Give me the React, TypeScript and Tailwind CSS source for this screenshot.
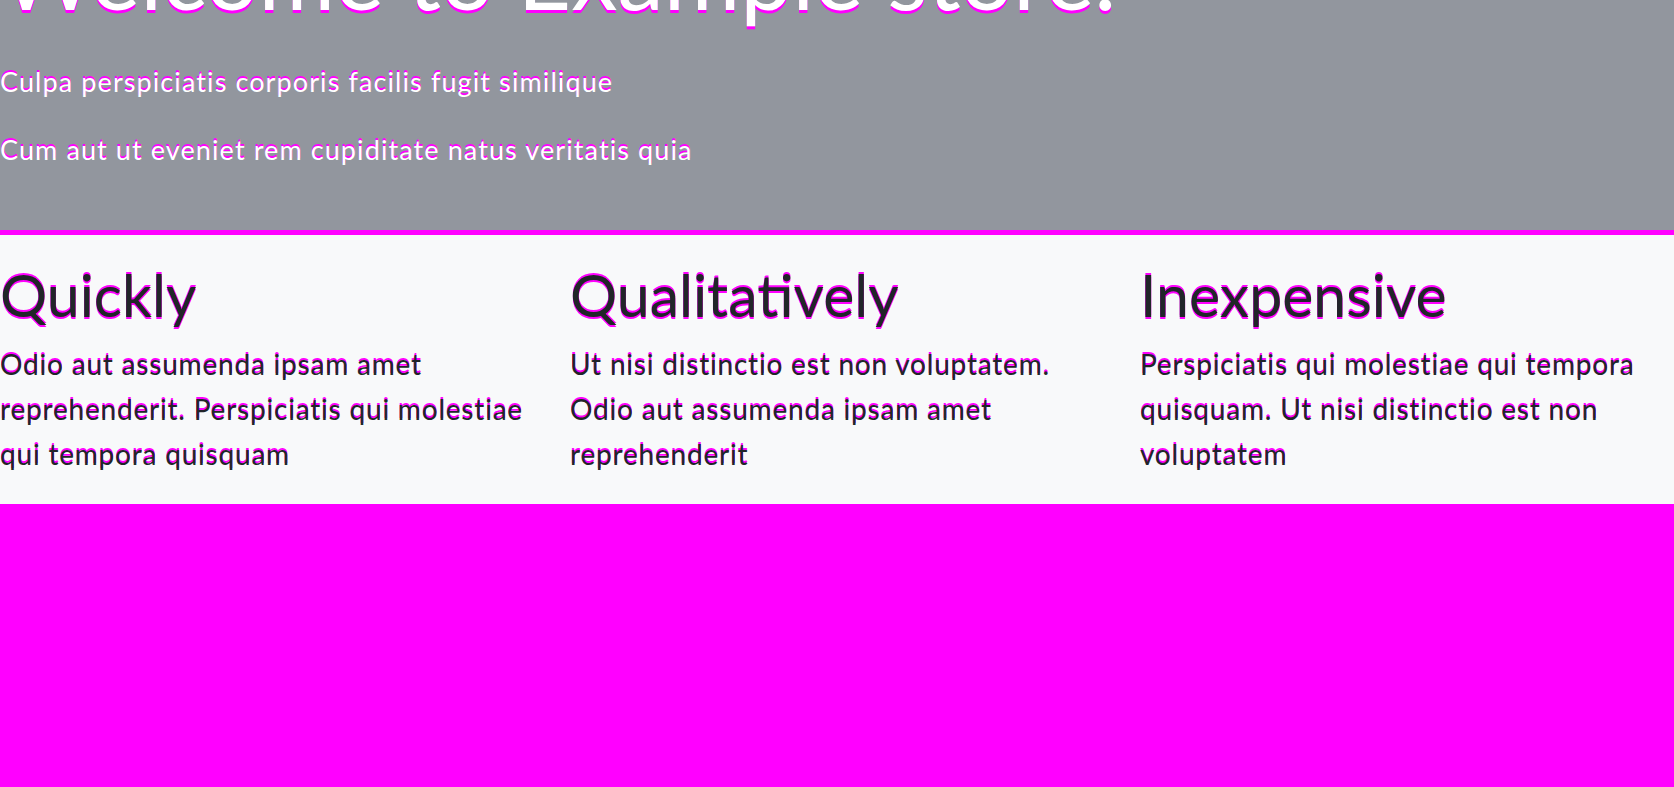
const features = [
  {
    title: "Quickly",
    text: "Odio aut assumenda ipsam amet reprehenderit. Perspiciatis qui molestiae qui tempora quisquam",
  },
  {
    title: "Qualitatively",
    text: "Ut nisi distinctio est non voluptatem. Odio aut assumenda ipsam amet reprehenderit",
  },
  {
    title: "Inexpensive",
    text: "Perspiciatis qui molestiae qui tempora quisquam. Ut nisi distinctio est non voluptatem",
  },
];

const App = () => {
  return (
    <div className="min-h-screen bg-[#ff00ff] font-['Lato',sans-serif]">
      <section className="overflow-hidden border-b-[5px] border-[#ff00ff] bg-[#92969e] pb-[60px] text-white">
        <h1 className="-mt-[81px] text-[93px] leading-[1.2] [text-shadow:0_3px_0_#ff00ff]">
          Welcome to Example store.
        </h1>
        <p className="mt-[31px] text-[27px] leading-[40px] tracking-[1.1px] [text-shadow:0_-2px_0_#ff00ff]">
          Culpa perspiciatis corporis facilis fugit similique
        </p>
        <p className="mt-[28px] text-[27px] leading-[40px] tracking-[1.1px] [text-shadow:0_-2px_0_#ff00ff]">
          Cum aut ut eveniet rem cupiditate natus veritatis quia
        </p>
      </section>

      <section className="bg-[#f8f9fa] pt-[24px] pb-[27px] text-[#212529]">
        <div className="grid grid-cols-[repeat(3,534px)] gap-x-[36px]">
          {features.map(({ title, text }) => (
            <div key={title}>
              <h2 className="text-[59px] leading-[72px] [text-shadow:0_-2px_0_#ff00ff,0_2px_0_#ff00ff]">
                {title}
              </h2>
              <p className="mt-[11px] text-[28px] leading-[45px] tracking-[0.8px] [text-shadow:0_-2px_0_#ff00ff]">
                {text}
              </p>
            </div>
          ))}
        </div>
      </section>
    </div>
  );
};

export default App;
